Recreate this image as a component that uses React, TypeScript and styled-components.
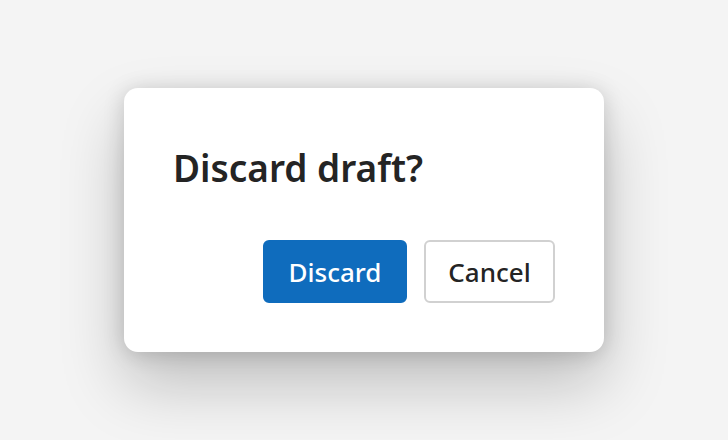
import React from 'react';
import styled, { createGlobalStyle } from 'styled-components';

const GlobalStyle = createGlobalStyle`
  html, body {
    margin: 0;
    padding: 0;
    height: 100%;
    background: #f4f4f4;
    font-family: "Noto Sans", "Open Sans", sans-serif;
  }
  #root {
    height: 100%;
  }
`;

const Page = styled.div`
  width: 728px;
  height: 440px;
  display: flex;
  align-items: center;
  justify-content: center;
`;

const Dialog = styled.div`
  width: 480px;
  height: 264px;
  box-sizing: border-box;
  padding: 55px 49px 49px 49px;
  display: flex;
  flex-direction: column;
  justify-content: space-between;
  background-color: #fff;
  border-radius: 14px;
  box-shadow: 0 32px 64px rgba(0, 0, 0, 0.22), 0 2px 21px rgba(0, 0, 0, 0.16);
`;

const Title = styled.h2`
  margin: 0;
  font-size: 37px;
  font-weight: 600;
  line-height: 50px;
  color: #242424;
`;

const Actions = styled.div`
  display: flex;
  justify-content: flex-end;
  gap: 17px;
`;

const Button = styled.button<{ $primary?: boolean }>`
  width: ${({ $primary }) => ($primary ? '144px' : '131px')};
  height: 63px;
  box-sizing: border-box;
  padding: 0;
  border-radius: 6px;
  font-family: inherit;
  font-size: 26px;
  font-weight: 500;
  cursor: pointer;
  color: ${({ $primary }) => ($primary ? '#fff' : '#242424')};
  background-color: ${({ $primary }) => ($primary ? '#0f6cbd' : '#fff')};
  border: ${({ $primary }) => ($primary ? '2px solid #0f6cbd' : '2px solid #d1d1d1')};
`;

export default function App() {
  return (
    <>
      <GlobalStyle />
      <Page>
        <Dialog>
          <Title>Discard draft?</Title>
          <Actions>
            <Button $primary>Discard</Button>
            <Button>Cancel</Button>
          </Actions>
        </Dialog>
      </Page>
    </>
  );
}
